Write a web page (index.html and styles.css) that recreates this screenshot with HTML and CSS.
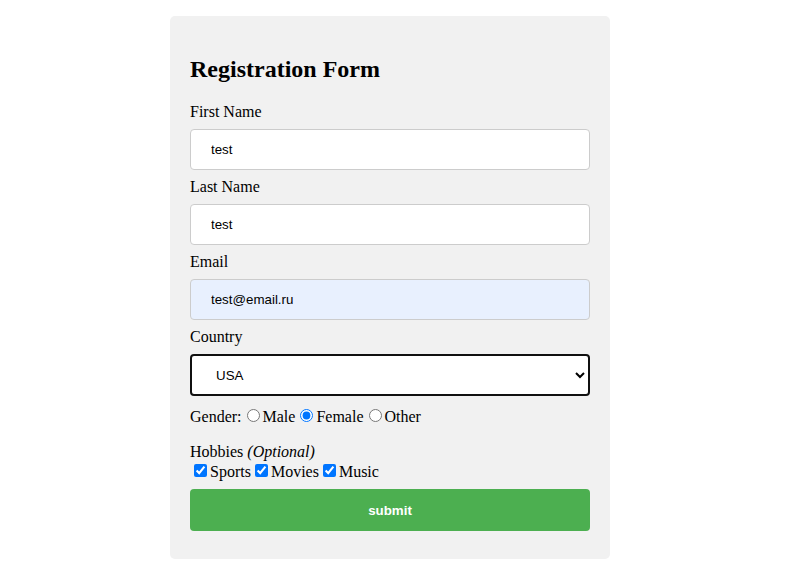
FILE: index.html
```html
<!DOCTYPE html>
<html>
<head>
<meta charset="utf-8">
<link rel="stylesheet" href="styles.css">
</head>
<body>
<div class="page">
  <form class="card">
    <h2 class="title">Registration Form</h2>
    <label class="field-label">First Name</label>
    <input class="text-input" type="text" value="test">
    <label class="field-label">Last Name</label>
    <input class="text-input" type="text" value="test">
    <label class="field-label">Email</label>
    <input class="text-input autofill" type="email" value="test@email.ru">
    <label class="field-label">Country</label>
    <select class="select-input">
      <option>USA</option>
      <option>Canada</option>
      <option>UK</option>
    </select>
    <div class="gender">Gender:<input type="radio" name="g" class="radio">Male<input type="radio" name="g" class="radio" checked>Female<input type="radio" name="g" class="radio">Other</div>
    <div class="hobbies-label">Hobbies <em>(Optional)</em></div>
    <div class="hobbies"><input type="checkbox" class="check" checked>Sports<input type="checkbox" class="check" checked>Movies<input type="checkbox" class="check" checked>Music</div>
    <button type="button" class="submit">submit</button>
  </form>
</div>
</body>
</html>
```
FILE: styles.css
```css
html, body {
  margin: 0;
  padding: 0;
  background: #ffffff;
}
body {
  font-family: "Liberation Serif", "Times New Roman", serif;
  font-size: 16px;
  color: #000;
}
.page {
  width: 780px;
  padding-top: 16px;
}
.card {
  display: block;
  width: 400px;
  margin: 0 auto;
  padding: 20px;
  background: #f1f1f1;
  border-radius: 5px;
}
.title {
  font-size: 24px;
  font-weight: bold;
  margin: 20px 0 20px;
  line-height: 27px;
}
.field-label {
  display: block;
  line-height: 18px;
}
.text-input {
  display: block;
  box-sizing: border-box;
  width: 100%;
  height: 41px;
  margin: 8px 0;
  padding: 12px 20px;
  border: 1px solid #ccc;
  border-radius: 4px;
  background: #fff;
  font-family: "Liberation Sans", Arial, sans-serif;
  font-size: 13.33px;
  color: #000;
}
.autofill {
  background: #e8f0fe;
}
.select-input {
  display: block;
  box-sizing: border-box;
  width: 100%;
  height: 42px;
  margin: 8px 0;
  padding: 0 20px;
  border: 2px solid #101010;
  border-radius: 4px;
  background: #fff;
  font-family: "Liberation Sans", Arial, sans-serif;
  font-size: 13.33px;
  color: #000;
  outline: none;
}
.gender {
  line-height: 18px;
  padding-top: 2px;
  margin-bottom: 17px;
}
.radio {
  margin: 3px 3px 0 5px;
  vertical-align: baseline;
}
.hobbies-label {
  line-height: 18px;
}
.hobbies {
  line-height: 18px;
}
.check {
  margin: 3px 3px 3px 4px;
  vertical-align: baseline;
}
.submit {
  display: block;
  width: 100%;
  height: 42px;
  margin: 8px 0;
  border: none;
  border-radius: 4px;
  background: #4caf50;
  color: #fff;
  font-family: "Liberation Sans", Arial, sans-serif;
  font-size: 13.33px;
  font-weight: bold;
}
```
